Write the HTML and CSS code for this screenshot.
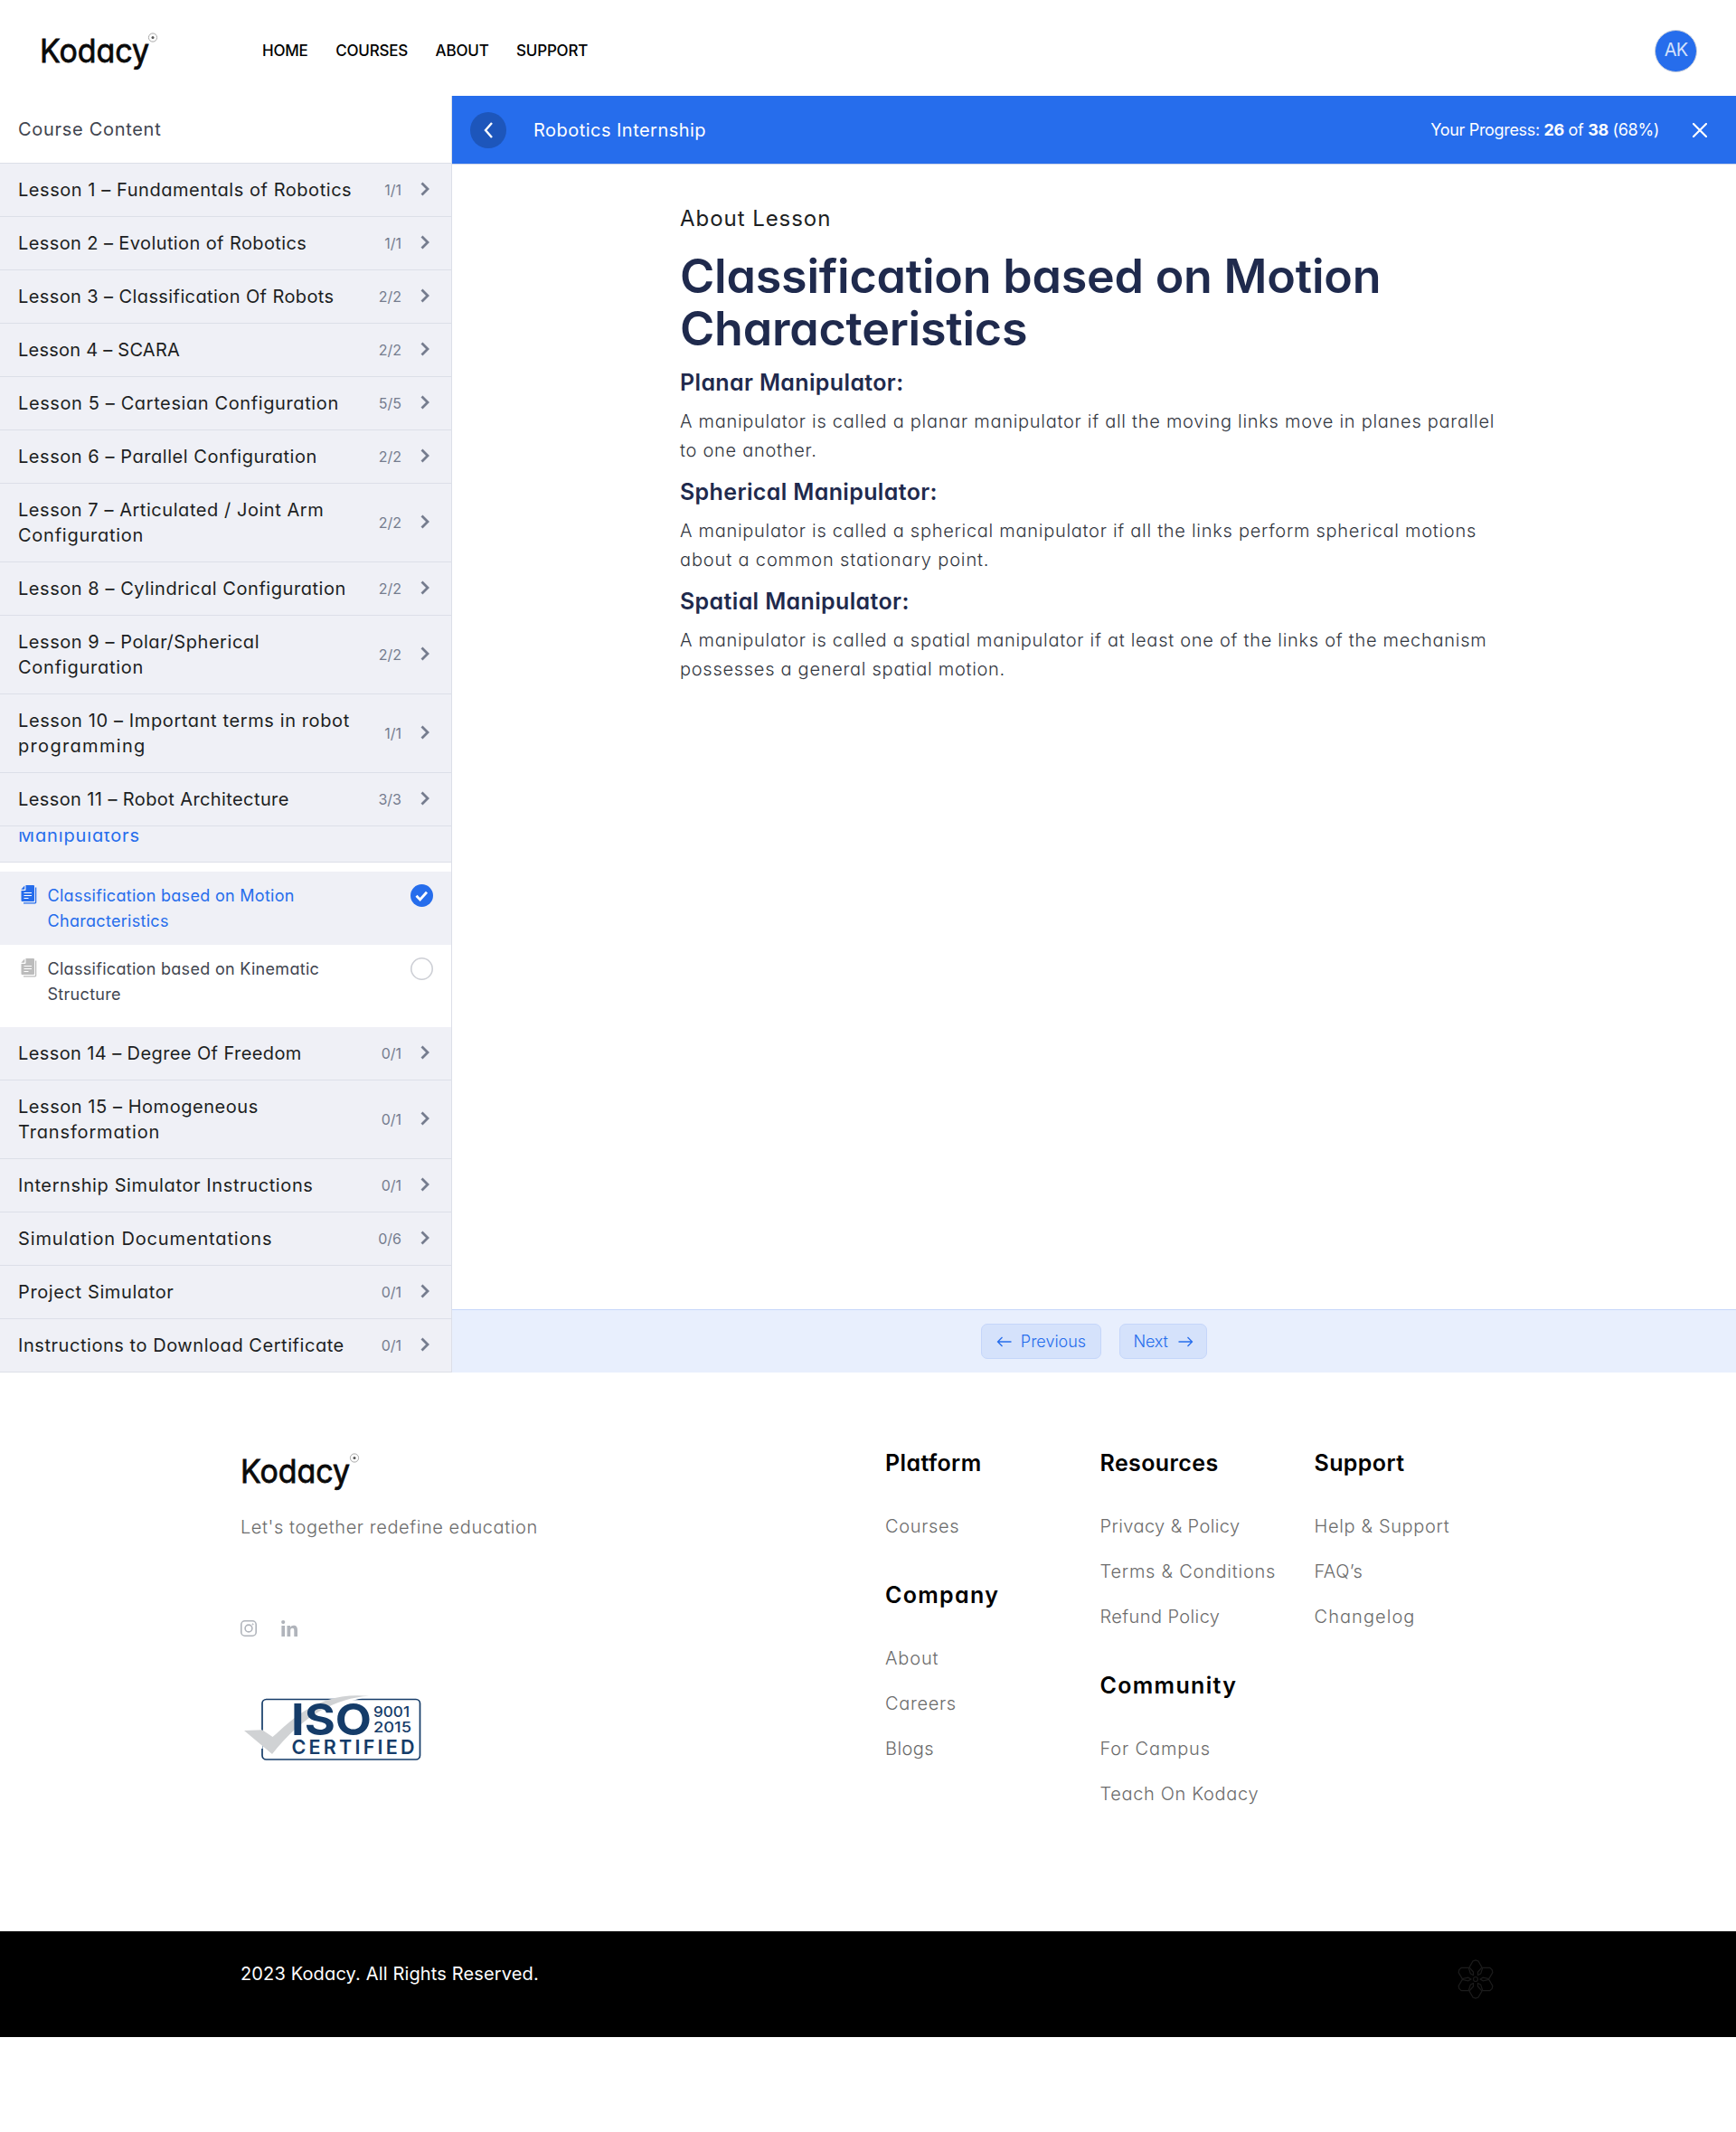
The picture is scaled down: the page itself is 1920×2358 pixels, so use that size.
FILE: index.html
```
<!DOCTYPE html>
<html lang="en">
<head>
<meta charset="utf-8">
<title>Robotics Internship – Kodacy</title>
<link rel="stylesheet" href="styles.css">
</head>
<body>
<svg class="defs" width="0" height="0">
  <symbol id="chev" viewBox="0 0 10 16"><path d="M1.500 1.500 8 8l-6.500 6.500" fill="none" stroke="#757c8e" stroke-width="2.800"/></symbol>
  <symbol id="doc" viewBox="0 0 18 22">
    <path d="M5.500 0H14a1 1 0 0 1 1 1v16a1 1 0 0 1-1 1H1.500a1 1 0 0 1-1-1V6H4.500a1 1 0 0 0 1-1Z" fill="currentColor"/>
    <path d="M4.300 .6V4a.8.8 0 0 1-.8.8H.3Z" fill="currentColor"/>
    <path d="M16.600 2.500V19a.8.8 0 0 1-.8.8H3" fill="none" stroke="currentColor" stroke-width="1.300"/>
    <path d="M3.500 8.500h8.500M3.500 11.500h8.500M3.500 14.500h5" stroke="#fff" stroke-width="1.100"/>
  </symbol>
</svg>

<header class="site-header">
  <svg class="logo" width="132" height="46" viewBox="0 0 132 46">
    <text x="-2" y="34" class="logo-text" textLength="121" lengthAdjust="spacingAndGlyphs">Kodacy</text>
    <circle cx="123" cy="6.500" r="4.600" fill="#fff" stroke="#aaa"/><circle cx="123" cy="6.500" r="1.500" fill="#555"/>
  </svg>
  <nav class="menu"><a>HOME</a><a>COURSES</a><a>ABOUT</a><a>SUPPORT</a></nav>
  <div class="avatar">AK</div>
</header>

<div class="player">
  <aside class="sidebar">
    <div class="side-title">Course Content</div>
    <div class="row"><span class="name">Lesson 1 – Fundamentals of Robotics</span><span class="count">1/1</span><svg class="chev"><use href="#chev"/></svg></div>
    <div class="row"><span class="name t4">Lesson 2 – Evolution of Robotics</span><span class="count">1/1</span><svg class="chev"><use href="#chev"/></svg></div>
    <div class="row"><span class="name t4">Lesson 3 – Classification Of Robots</span><span class="count">2/2</span><svg class="chev"><use href="#chev"/></svg></div>
    <div class="row"><span class="name t2">Lesson 4 – SCARA</span><span class="count">2/2</span><svg class="chev"><use href="#chev"/></svg></div>
    <div class="row"><span class="name t6">Lesson 5 – Cartesian Configuration</span><span class="count">5/5</span><svg class="chev"><use href="#chev"/></svg></div>
    <div class="row"><span class="name">Lesson 6 – Parallel Configuration</span><span class="count">2/2</span><svg class="chev"><use href="#chev"/></svg></div>
    <div class="row"><span class="name">Lesson 7 – Articulated / Joint Arm<br><span class="t7">Configuration</span></span><span class="count">2/2</span><svg class="chev"><use href="#chev"/></svg></div>
    <div class="row"><span class="name">Lesson 8 – Cylindrical Configuration</span><span class="count">2/2</span><svg class="chev"><use href="#chev"/></svg></div>
    <div class="row"><span class="name">Lesson 9 – Polar/Spherical<br><span class="t7">Configuration</span></span><span class="count">2/2</span><svg class="chev"><use href="#chev"/></svg></div>
    <div class="row"><span class="name t6">Lesson 10 – Important terms in robot<br><span class="t13">programming</span></span><span class="count">1/1</span><svg class="chev"><use href="#chev"/></svg></div>
    <div class="row"><span class="name t4">Lesson 11 – Robot Architecture</span><span class="count">3/3</span><svg class="chev"><use href="#chev"/></svg></div>
    <div class="row-clipped"><div class="clip"><span class="t8">Manipulators</span></div></div>
    <div class="topics">
      <div class="topic active">
        <svg class="doc"><use href="#doc"/></svg>
        <span class="topic-name">Classification based on Motion<br>Characteristics</span>
        <svg class="state" viewBox="0 0 25 25"><circle cx="12.500" cy="12.500" r="12.500" fill="#266dec"/><path d="m6.500 12.800 4.100 4.200 7.400-8.200" fill="none" stroke="#fff" stroke-width="2.800"/></svg>
      </div>
      <div class="topic">
        <svg class="doc"><use href="#doc"/></svg>
        <span class="topic-name">Classification based on Kinematic<br>Structure</span>
        <svg class="state" viewBox="0 0 25 25"><circle cx="12.500" cy="12.500" r="11.700" fill="#fff" stroke="#cdcfd5" stroke-width="1.600"/></svg>
      </div>
    </div>
    <div class="row"><span class="name t4">Lesson 14 – Degree Of Freedom</span><span class="count">0/1</span><svg class="chev"><use href="#chev"/></svg></div>
    <div class="row"><span class="name">Lesson 15 – Homogeneous<br><span class="t8">Transformation</span></span><span class="count">0/1</span><svg class="chev"><use href="#chev"/></svg></div>
    <div class="row"><span class="name t6">Internship Simulator Instructions</span><span class="count">0/1</span><svg class="chev"><use href="#chev"/></svg></div>
    <div class="row"><span class="name t8">Simulation Documentations</span><span class="count">0/6</span><svg class="chev"><use href="#chev"/></svg></div>
    <div class="row"><span class="name t6">Project Simulator</span><span class="count">0/1</span><svg class="chev"><use href="#chev"/></svg></div>
    <div class="row"><span class="name">Instructions to Download Certificate</span><span class="count">0/1</span><svg class="chev"><use href="#chev"/></svg></div>
  </aside>

  <main class="lesson">
    <div class="topbar">
      <span class="back"><svg width="12" height="20" viewBox="0 0 12 20"><path d="M10 2 3 10l7 8" fill="none" stroke="#fff" stroke-width="2.400"/></svg></span>
      <span class="course">Robotics Internship</span>
      <span class="progress">Your Progress: <b>26</b> of <b>38</b> (68%)</span>
      <svg class="close" viewBox="0 0 16 16"><path d="m1 1 14 14M15 1 1 15" stroke="#fff" stroke-width="2.200" stroke-linecap="round"/></svg>
    </div>
    <article class="content">
      <div class="about">About Lesson</div>
      <h1>Classification based on Motion<br>Characteristics</h1>
      <h3>Planar Manipulator:</h3>
      <p>A manipulator is called a planar manipulator if all the moving links move in planes parallel<br>to one another.</p>
      <h3>Spherical Manipulator:</h3>
      <p>A manipulator is called a spherical manipulator if all the links perform spherical motions<br><span class="t8">about a common stationary point.</span></p>
      <h3>Spatial Manipulator:</h3>
      <p>A manipulator is called a spatial manipulator if at least one of the links of the mechanism<br>possesses a general spatial motion.</p>
    </article>
    <div class="pager">
      <a class="btn"><svg width="17" height="12" viewBox="0 0 17 12"><path d="M16.500 6H1.500M6.500 1l-5 5 5 5" fill="none" stroke="#266dec" stroke-width="1.300"/></svg><span>Previous</span></a>
      <a class="btn"><span class="tn">Next</span><svg width="17" height="12" viewBox="0 0 17 12"><path d="M.5 6h15M10.500 1l5 5-5 5" fill="none" stroke="#266dec" stroke-width="1.300"/></svg></a>
    </div>
  </main>
</div>

<footer class="footer">
  <div class="brand">
    <svg class="logo" width="132" height="46" viewBox="0 0 132 46">
      <text x="-2" y="34" class="logo-text" textLength="121" lengthAdjust="spacingAndGlyphs">Kodacy</text>
      <circle cx="124" cy="6.500" r="4.600" fill="#fff" stroke="#aaa"/><circle cx="124" cy="6.500" r="1.500" fill="#555"/>
    </svg>
    <div class="tagline">Let's together redefine education</div>
    <div class="social">
      <svg width="18" height="18" viewBox="0 0 18 18" fill="none" stroke="#b0b4bb"><rect x=".8" y=".8" width="16.400" height="16.400" rx="4" stroke-width="1.600"/><circle cx="9" cy="9" r="3.900" stroke-width="1.600"/><circle cx="13.600" cy="4.400" r=".6"/></svg>
      <svg width="18" height="18" viewBox="0 0 18 18" fill="#b0b4bb"><circle cx="2.200" cy="2.100" r="2.100"/><path d="M.4 6h3.700v12H.4ZM6.500 6H10v1.700c.7-1.200 2-2 3.700-2 3.300 0 4.300 2 4.300 5.300v7h-3.700v-6.200c0-1.800-.3-3-1.900-3-1.700 0-2.200 1.200-2.200 3V18H6.500Z"/></svg>
    </div>
    <svg class="iso" width="220" height="100" viewBox="0 0 220 100">
      <rect x="30" y="19.500" width="174.500" height="66.500" rx="4.500" fill="none" stroke="#153c69" stroke-width="1.700"/>
      <path d="M112 17 150 15.500 122 23Z" fill="#fff"/>
      <path d="M29 70v4M29 54v17" stroke="#fff" stroke-width="3"/>
      <path d="M10 54 30 53.300 41.500 61C62 43 92 10 148 15.800 112 18 75 37 41 80Z" fill="#d0d2d4"/>
      <text x="62" y="59" class="iso-text" font-size="48.500" font-weight="700" textLength="89" lengthAdjust="spacingAndGlyphs">ISO</text>
      <text x="153" y="39" class="iso-text" font-size="16.500" font-weight="500" textLength="40" lengthAdjust="spacingAndGlyphs">9001</text>
      <text x="153" y="56" class="iso-text" font-size="16.500" font-weight="500" textLength="42" lengthAdjust="spacingAndGlyphs">2015</text>
      <text x="62.500" y="80" class="iso-text" font-size="21.500" font-weight="600" textLength="136">CERTIFIED</text>
    </svg>
  </div>
  <div class="col">
    <h4>Platform</h4>
    <a>Courses</a>
    <h4 class="t13">Company</h4>
    <a class="t8">About</a><a>Careers</a><a class="t4">Blogs</a>
  </div>
  <div class="col">
    <h4>Resources</h4>
    <a class="t4">Privacy &amp; Policy</a><a class="t7">Terms &amp; Conditions</a><a class="t4">Refund Policy</a>
    <h4 class="t13">Community</h4>
    <a class="t8">For Campus</a><a>Teach On Kodacy</a>
  </div>
  <div class="col">
    <h4>Support</h4>
    <a>Help &amp; Support</a><a class="t4">FAQ’s</a><a class="t10">Changelog</a>
  </div>
</footer>

<div class="copyright">
  <span>2023 Kodacy. All Rights Reserved.</span>
  <svg width="44" height="44" viewBox="-22 -22 44 44" fill="none" stroke="#1c1c1c" stroke-width="1.200">
    <path id="petal" d="M-2.500-4V-8L-7-13-3-20 0-21 3-20 7-13 2.500-8V-4"/>
    <use href="#petal" transform="rotate(60)"/><use href="#petal" transform="rotate(120)"/><use href="#petal" transform="rotate(180)"/><use href="#petal" transform="rotate(240)"/><use href="#petal" transform="rotate(300)"/>
    <circle r="2.500"/>
  </svg>
</div>
</body>
</html>
```
FILE: styles.css
```
* { box-sizing: border-box; }
body {
  margin: 0;
  background: #fff;
  font-family: Inter, "Open Sans", sans-serif;
  font-feature-settings: "cv11";
  font-size: 20px;
  color: #1c1e22;
}
.defs { display: block; position: absolute; }
h1, h3, h4, p { margin: 0; }

.logo { display: block; overflow: visible; }
.logo-text { font-size: 36px; font-weight: 400; fill: #0a0a0a; stroke: #0a0a0a; stroke-width: .8px; }

/* header */
.site-header { display: flex; align-items: center; height: 106px; padding: 0 43px 0 46px; }
.site-header .logo { margin-top: 9px; }
.menu { display: flex; gap: 30.500px; margin: 6px auto 0 112px; font-size: 17px; font-weight: 500; letter-spacing: -.2px; color: #000; }
.avatar { width: 47px; height: 47px; margin-top: 7px; border: 1px solid #c9cfdc; border-radius: 50%; background: #266dec; color: #d3e1fb; text-align: center; line-height: 43px; letter-spacing: -.9px; }

/* course player */
.player { display: grid; grid-template-columns: 500px 1fr; height: 1412px; }
.sidebar { border-right: 1px solid #dcdfe8; }
.side-title { height: 75px; padding: 0 20px; border-bottom: 1px solid #dcdfe8; color: #41454f; line-height: 74px; letter-spacing: .7px; }
.row { display: flex; align-items: center; padding: 15px 24px 15px 20px; border-bottom: 1px solid #dcdfe8; background: #eff0f6; line-height: 28px; }
.name { flex: 1; white-space: nowrap; letter-spacing: .55px; }
.count { font-size: 16px; color: #757c8e; }
.chev { width: 10px; height: 16px; margin: -2px 0 0 21px; }
.row-clipped { height: 40px; padding: 6px 20px 0; border-bottom: 1px solid #dcdfe8; background: #eff0f6; }
.clip { height: 33px; overflow: hidden; line-height: 28px; color: #266dec; }
.clip span { display: block; margin-top: -10px; }
.topics { padding-top: 10px; }
.topic { display: flex; align-items: flex-start; height: 81px; padding: 13px 20px 0 23px; color: #bcbcbc; }
.topic.active { background: #eff0f6; color: #266dec; }
.topic:last-child { height: 91px; }
.doc { width: 18px; height: 22px; margin-top: 2px; }
.topic-name { flex: 1; margin-left: 11.500px; font-size: 18px; line-height: 28px; letter-spacing: .3px; color: #41454f; }
.active .topic-name { color: #266dec; }
.state { width: 25px; height: 25px; margin-top: 1px; }

.lesson { display: flex; flex-direction: column; }
.topbar { display: flex; align-items: center; height: 76px; padding: 0 32px 0 20px; border-bottom: 1px solid #cdd5e8; background: #266dec; color: #fff; }
.back { display: flex; align-items: center; justify-content: center; width: 40px; height: 40px; border-radius: 50%; background: #1d56bb; }
.course { margin-left: 30px; letter-spacing: .47px; }
.progress { margin-left: auto; font-size: 18px; letter-spacing: -.33px; }
.close { width: 16px; height: 16px; margin-left: 37px; }
.content { flex: 1; padding: 42px 0 0 252px; }
.about { font-size: 24px; line-height: 36px; letter-spacing: .95px; }
h1 { margin-top: 17px; font-size: 52px; font-weight: 600; line-height: 58px; letter-spacing: -.22px; color: #1f2a4d; }
h3 { margin-top: 15px; font-size: 25px; font-weight: 600; line-height: 30px; letter-spacing: .36px; color: #1f2a4d; }
p { margin-top: 12px; font-weight: 300; line-height: 32px; letter-spacing: .72px; color: #33373f; white-space: nowrap; }
.pager { display: flex; align-items: center; justify-content: center; gap: 20px; height: 70px; border-top: 1px solid #c5d6fa; background: #e8effd; }
.btn { display: flex; align-items: center; justify-content: center; gap: 10px; width: 133px; height: 39px; border: 1px solid #c5d6fa; border-radius: 7px; background: #d5e2fb; color: #266dec; font-size: 18px; font-weight: 300; }
.btn + .btn { width: 97px; gap: 11px; }
.tn { letter-spacing: -.2px; }

/* footer */
.footer { display: grid; grid-template-columns: 712px 237.500px 237px 1fr; height: 618px; padding: 85px 0 0 267px; color: #6c6c6c; }
.brand .logo { margin: 3px 0 0 1px; }
.tagline { margin: 22px 0 0 -1px; line-height: 30px; font-weight: 300; letter-spacing: .58px; }
.social { display: flex; gap: 27px; margin: 88px 0 0 -1px; }
.iso { display: block; margin: 50px 0 0 -7px; }
.iso-text { fill: #153c69; font-feature-settings: normal; }
.col h4 { margin: 36px 0 30px; font-size: 25px; font-weight: 600; line-height: 30px; letter-spacing: .4px; color: #000; }
.col h4:first-child { margin-top: 0; }
.col a { display: block; line-height: 50px; font-weight: 300; letter-spacing: .65px; }

.copyright { display: flex; justify-content: space-between; height: 117px; padding: 31px 266px 0; background: #000; color: #fff; letter-spacing: .14px; }
.copyright span { line-height: 32px; }

/* tracking */
.t2 { letter-spacing: .24px; }
.t4, .col a.t4 { letter-spacing: .4px; }
.t6 { letter-spacing: .61px; }
.t7, .col a.t7 { letter-spacing: .75px; }
.t8, .col a.t8 { letter-spacing: .86px; }
.t10, .col a.t10 { letter-spacing: 1.070px; }
.t13, .col h4.t13 { letter-spacing: 1.320px; }
```
